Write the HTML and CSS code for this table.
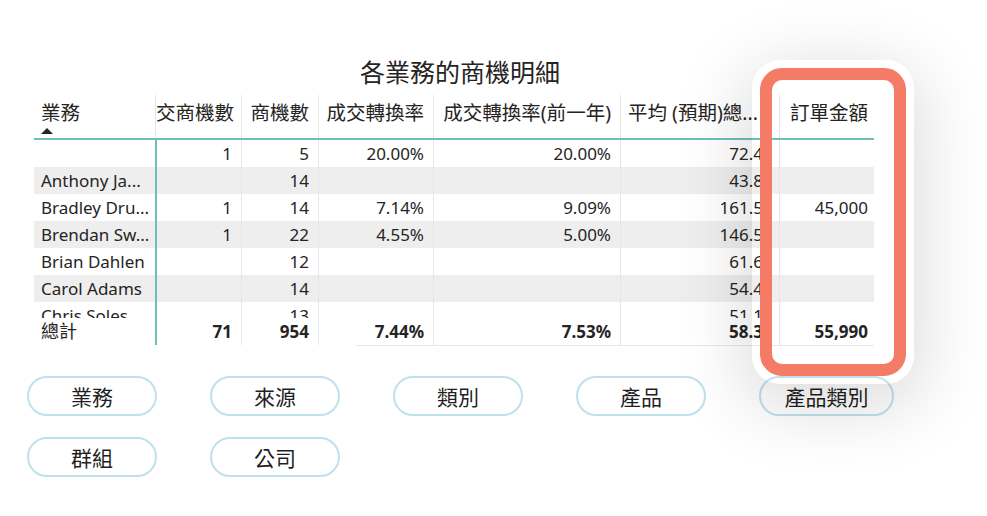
FILE: index.html
```html
<!DOCTYPE html>
<html lang="zh-Hant">
<head>
<meta charset="utf-8">
<link rel="stylesheet" href="styles.css">
</head>
<body>
<div class="page">
  <div class="visual">
    <div class="title">各業務的商機明細</div>
    <div class="row head">
      <div class="c first">業務<span class="sort"></span></div>
      <div class="c">交商機數</div>
      <div class="c">商機數</div>
      <div class="c">成交轉換率</div>
      <div class="c">成交轉換率(前一年)</div>
      <div class="c clip">平均 (預期)總...</div>
      <div class="c last">訂單金額</div>
    </div>
    <div class="body">
      <div class="row">
        <div class="c first"></div><div class="c">1</div><div class="c">5</div><div class="c">20.00%</div><div class="c">20.00%</div><div class="c avg">72.4</div><div class="c last"></div>
      </div>
      <div class="row stripe">
        <div class="c first">Anthony Ja...</div><div class="c"></div><div class="c">14</div><div class="c"></div><div class="c"></div><div class="c avg">43.8</div><div class="c last"></div>
      </div>
      <div class="row">
        <div class="c first">Bradley Dru...</div><div class="c">1</div><div class="c">14</div><div class="c">7.14%</div><div class="c">9.09%</div><div class="c avg">161.5</div><div class="c last">45,000</div>
      </div>
      <div class="row stripe">
        <div class="c first">Brendan Sw...</div><div class="c">1</div><div class="c">22</div><div class="c">4.55%</div><div class="c">5.00%</div><div class="c avg">146.5</div><div class="c last"></div>
      </div>
      <div class="row">
        <div class="c first">Brian Dahlen</div><div class="c"></div><div class="c">12</div><div class="c"></div><div class="c"></div><div class="c avg">61.6</div><div class="c last"></div>
      </div>
      <div class="row stripe">
        <div class="c first">Carol Adams</div><div class="c"></div><div class="c">14</div><div class="c"></div><div class="c"></div><div class="c avg">54.4</div><div class="c last"></div>
      </div>
      <div class="row">
        <div class="c first">Chris Soles</div><div class="c"></div><div class="c">13</div><div class="c"></div><div class="c"></div><div class="c avg">51.1</div><div class="c last"></div>
      </div>
    </div>
    <div class="row total">
      <div class="c first">總計</div><div class="c">71</div><div class="c">954</div><div class="c">7.44%</div><div class="c">7.53%</div><div class="c avg">58.3</div><div class="c last">55,990</div>
    </div>
    <div class="foot-line"></div>
  </div>
  <div class="slicers">
    <div class="btn-row">
      <div class="btn">業務</div>
      <div class="btn">來源</div>
      <div class="btn">類別</div>
      <div class="btn">產品</div>
      <div class="btn wide">產品類別</div>
    </div>
    <div class="btn-row">
      <div class="btn">群組</div>
      <div class="btn">公司</div>
    </div>
  </div>
  <div class="spotlight"><div class="ring"></div></div>
</div>
</body>
</html>
```
FILE: styles.css
```css
* { box-sizing: border-box; }
body {
  margin: 0;
  background: #fff;
  font-family: "Noto Sans", "Noto Sans CJK TC", sans-serif;
  color: #252423;
}
.page {
  position: relative;
  width: 987px;
  height: 516px;
  overflow: hidden;
}
.visual {
  padding: 57px 0 0 34px;
}
.title {
  width: 840px;
  padding-left: 12px;
  text-align: center;
  font-size: 25px;
  line-height: 30px;
  height: 38px;
}
.row {
  display: grid;
  grid-template-columns: 121px 86px 77px 115px 187px 159px 95px;
  width: 840px;
}
.c {
  white-space: nowrap;
  overflow: hidden;
  text-align: right;
  padding-right: 9px;
}
.c + .c { border-left: 1px solid #e6e6e6; }
.c.first { text-align: left; padding-left: 7px; padding-right: 0; }
.c.last { padding-right: 6px; }
.c.avg { padding-right: 16px; }
.head {
  height: 45px;
  border-bottom: 2px solid #6cc0b8;
}
.head .c {
  font-size: 19.5px;
  line-height: 24px;
  padding-top: 6px;
}
.head .c.clip { text-align: left; padding-left: 7px; }
.sort {
  display: block;
  width: 0;
  height: 0;
  margin-top: 3px;
  border-left: 6px solid transparent;
  border-right: 6px solid transparent;
  border-bottom: 6px solid #252423;
}
.body {
  height: 178px;
  overflow: hidden;
}
.body .c, .total .c {
  font-size: 17px;
  line-height: 27px;
  height: 27px;
}
.body .c:nth-child(2), .total .c:nth-child(2) {
  border-left: 2px solid #6cc0b8;
}
.stripe { background: #eeeeee; }
.total .c { font-weight: 700; }
.total .c.first { font-weight: 400; font-size: 18px; }
.foot-line {
  margin-left: 322px;
  width: 518px;
  height: 1px;
  background: #e8e8e8;
}
.slicers {
  padding: 30px 0 0 27px;
  display: flex;
  flex-direction: column;
  gap: 21px;
}
.btn-row {
  display: flex;
  gap: 53px;
}
.btn {
  width: 130px;
  height: 40px;
  border: 2px solid #bfe1ee;
  border-radius: 20px;
  display: flex;
  align-items: center;
  justify-content: center;
  font-size: 21px;
  color: #1f1f1f;
}
.btn.wide { width: 135px; }
.spotlight {
  position: absolute;
  left: 752px;
  top: 60px;
  width: 162px;
  height: 324px;
  border-radius: 28px;
  box-shadow: 0 16px 70px 8px rgba(0, 0, 0, 0.14);
}
.ring {
  position: absolute;
  inset: 8px;
  border: 12px solid #f47b66;
  border-radius: 22px;
}
```
